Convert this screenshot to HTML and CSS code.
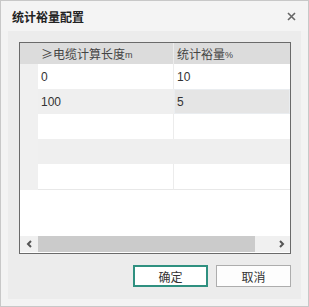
FILE: index.html
```html
<!DOCTYPE html>
<html lang="zh">
<head>
<meta charset="utf-8">
<title>统计裕量配置</title>
<link rel="stylesheet" href="styles.css">
</head>
<body>
<div class="window">
  <div class="titlebar">
    <span class="title">统计裕量配置</span>
    <svg class="close" width="9" height="9" viewBox="0 0 9 9"><path d="M1 1L8 8M8 1L1 8" stroke="#666" stroke-width="1.6" fill="none"/></svg>
  </div>
  <div class="frame">
    <div class="panel">
      <div class="grid">
        <div class="head">
          <div class="rh"></div>
          <div class="c1">≥电缆计算长度<span class="unit">m</span></div>
          <div class="c2">统计裕量<span class="unit">%</span></div>
        </div>
        <div class="row">
          <div class="rh"></div><div class="c1">0</div><div class="c2">10</div>
        </div>
        <div class="row alt">
          <div class="rh"></div><div class="c1">100</div><div class="c2 sel">5</div>
        </div>
        <div class="row">
          <div class="rh"></div><div class="c1"></div><div class="c2"></div>
        </div>
        <div class="row alt">
          <div class="rh"></div><div class="c1"></div><div class="c2"></div>
        </div>
        <div class="row last">
          <div class="rh"></div><div class="c1"></div><div class="c2"></div>
        </div>
        <div class="empty"></div>
        <div class="hscroll">
          <div class="btn"><svg width="7" height="8" viewBox="0 0 7 8"><path d="M5 1L2 4L5 7" stroke="#555" stroke-width="2" fill="none"/></svg></div>
          <div class="thumb"></div>
          <div class="track"></div>
          <div class="btn"><svg width="7" height="8" viewBox="0 0 7 8"><path d="M2 1L5 4L2 7" stroke="#555" stroke-width="2" fill="none"/></svg></div>
        </div>
      </div>
      <div class="actions">
        <button class="button primary">确定</button>
        <button class="button">取消</button>
      </div>
    </div>
  </div>
</div>
</body>
</html>
```
FILE: styles.css
```css
html, body {
  margin: 0;
  padding: 0;
}
body {
  font-family: "Liberation Sans", "Noto Sans CJK SC", sans-serif;
  font-size: 12px;
  color: #333;
  background: #f3f3f3;
}
.window {
  width: 309px;
  height: 307px;
  box-sizing: border-box;
  border: 1px solid #c8c8c8;
  background: #f3f3f3;
  display: flex;
  flex-direction: column;
}
.titlebar {
  height: 30px;
  flex: none;
  display: flex;
  align-items: center;
  justify-content: space-between;
  padding: 0 12px 0 11px;
  background: #f4f4f4;
}
.title {
  font-family: "Noto Sans CJK SC", sans-serif;
  font-size: 12px;
  font-weight: 700;
  color: #222;
}
.close {
  display: block;
}
.frame {
  flex: 1;
  display: flex;
  padding: 0 7px 7px 7px;
}
.panel {
  flex: 1;
  background: #ececec;
  padding: 11px 10px 0 11px;
  display: flex;
  flex-direction: column;
}
.grid {
  height: 212px;
  box-sizing: border-box;
  border: 1px solid #6a6a6a;
  background: #fff;
  display: flex;
  flex-direction: column;
}
.head, .row {
  display: flex;
  flex: none;
}
.head {
  height: 21px;
  background: #dcdcdc;
  color: #444;
}
.row {
  height: 25px;
}
.rh {
  width: 18px;
  flex: none;
  background: #f0f0f0;
}
.head .rh {
  background: #dcdcdc;
}
.c1 {
  width: 132px;
  flex: none;
  padding-left: 3px;
  border-right: 1px solid #ececec;
  display: flex;
  align-items: center;
}
.c2 {
  flex: 1;
  padding-left: 3px;
  display: flex;
  align-items: center;
}
.head .c1 {
  border-right-color: #ececec;
}
.head .c1, .head .c2 {
  font-family: "Noto Sans CJK SC", sans-serif;
}
.unit {
  font-family: "Liberation Sans", sans-serif;
  font-size: 9px;
  margin-top: 2px;
}
.alt .c1, .alt .c2 {
  background: #efefef;
  border-right-color: #efefef;
}
.alt .c2.sel {
  background: #e5e5e5;
  box-shadow: inset 0 0 0 1px #eaedf0;
}
.row.last .c1, .row.last .c2 {
  border-bottom: 1px solid #e8e8e8;
}
.row.last {
  height: 26px;
}
.empty {
  flex: 1;
}
.hscroll {
  height: 16px;
  flex: none;
  display: flex;
  background: #f0f0f0;
  margin-bottom: 1px;
}
.btn {
  width: 18px;
  display: flex;
  align-items: center;
  justify-content: center;
}
.thumb {
  width: 217px;
  background: #cbcbcb;
}
.track {
  flex: 1;
}
.actions {
  display: flex;
  justify-content: flex-end;
  gap: 8px;
  margin-top: 11px;
}
.button {
  width: 75px;
  height: 22px;
  box-sizing: border-box;
  border: 1px solid #adadad;
  background: #fdfdfd;
  font-family: "Noto Sans CJK SC", sans-serif;
  font-size: 12px;
  color: #333;
  padding: 0;
  display: flex;
  align-items: center;
  justify-content: center;
}
.button.primary {
  border: 2px solid #2f9080;
  background: #fff;
}
```
